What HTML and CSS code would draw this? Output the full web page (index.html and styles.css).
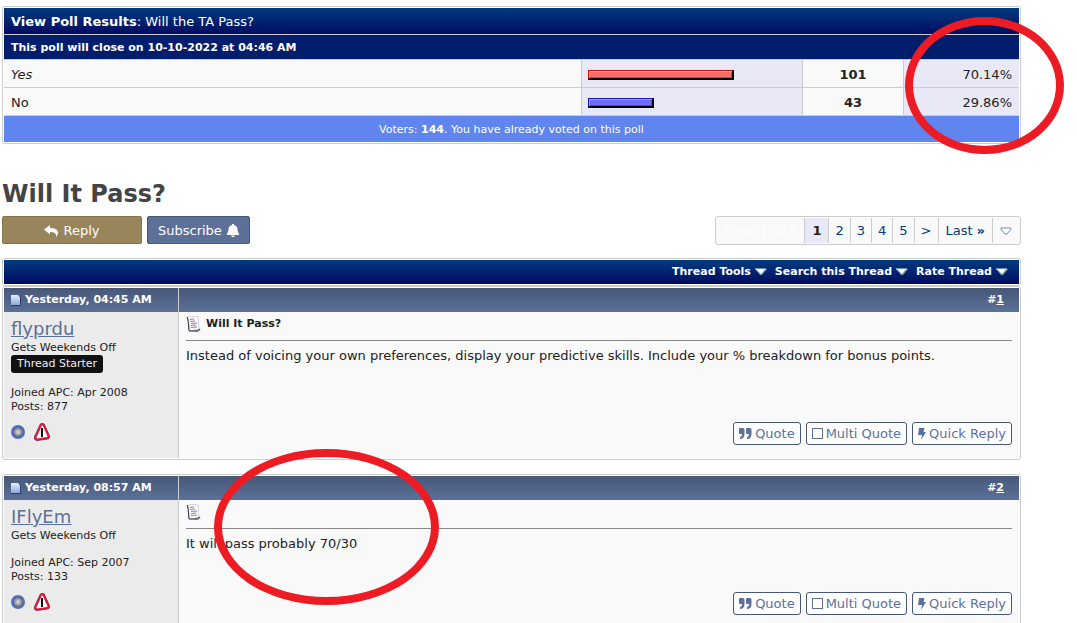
FILE: index.html
```html
<!DOCTYPE html>
<html lang="en">

<head>
    <meta charset="UTF-8">
    <meta name="viewport" content="width=device-width, initial-scale=1.0">
    <title>Will It Pass?</title>
    <link rel="stylesheet" href="styles.css">
</head>

<body>
    <!-- Shared icons -->
    <svg class="sprite" aria-hidden="true">
        <defs>
            <linearGradient id="page-fill" x1="0" y1="0" x2="0" y2="1">
                <stop offset="0" stop-color="#e4effb" />
                <stop offset="1" stop-color="#8ea9de" />
            </linearGradient>
            <radialGradient id="orb-fill">
                <stop offset="0" stop-color="#e4e4e4" />
                <stop offset="1" stop-color="#666a74" />
            </radialGradient>
        </defs>
        <symbol id="icon-page" viewBox="0 0 10 11">
            <path d="M0 0h7l3 3v8H0z" fill="#2c3c6a" />
            <path d="M0 0h7l2 3v7H0z" fill="url(#page-fill)" />
            <path d="M7 0v3h2" fill="#cfdcf3" />
        </symbol>
        <symbol id="icon-down" viewBox="0 0 12 8">
            <path d="M0 1h12L7 7H5z" fill="#7f9fa9" />
            <path d="M1 1h9L6 6z" fill="#fff" />
            <path d="M0 1h11" stroke="#dfe8ea" />
        </symbol>
        <symbol id="icon-down-outline" viewBox="0 0 12 8">
            <path d="M1 1h10v1L7 7H5L1 2z" fill="#fff" stroke="#6f92a8" />
        </symbol>
        <symbol id="icon-note" viewBox="0 0 15 16">
            <path d="M1 1l11-1 1 13 2 1-3 2-8-1z" fill="#a8aab6" />
            <path d="M2 1l10-1 1 13-9 2z" fill="#f8f8fc" stroke="#d4d5de" />
            <path d="M1 1l1 3 1 11 8 0 3-2" fill="none" stroke="#33353c" />
            <path d="M4 3.500l4-.5M4 5.500l5-.5M5 7.500l6-.5M5 9.500l5-.5M5 11.500l6-.5" stroke="#8b8d96" />
        </symbol>
        <symbol id="icon-orb" viewBox="0 0 14 14">
            <circle cx="7" cy="7" r="6" fill="#23346f" stroke="#4a6fd0" stroke-width="2" />
            <circle cx="7" cy="7" r="5" fill="url(#orb-fill)" />
        </symbol>
        <symbol id="icon-warn" viewBox="0 0 16 18">
            <path d="M7 2q1.500-1 2.500 0l5 11q0 2-1.500 2L3 16.500Q1 16 1.500 14z" fill="#fff" stroke="#434a72" stroke-width="3" stroke-linejoin="round" />
            <path d="M7 2q1.500-1 2.500 0l5 11q0 2-1.500 2L3 16.500Q1 16 1.500 14z" fill="#fff" stroke="#ee1438" stroke-width="2" stroke-linejoin="round" />
            <path d="M8 5v9" stroke="#111" stroke-width="2" />
        </symbol>
        <symbol id="icon-quote" viewBox="0 0 13 11">
            <path d="M1 0h3q1.500 0 1.500 1.500V6q0 5-4.500 5V9q2 0 2-3H1Q0 6 0 5V1q0-1 1-1z" fill="currentColor" />
            <path d="M8 0h3q1.500 0 1.500 1.500V6q0 5-4.500 5V9q2 0 2-3H8Q7 6 7 5V1q0-1 1-1z" fill="currentColor" />
        </symbol>
        <symbol id="icon-bolt" viewBox="0 0 8 12">
            <path d="M1 0h5.500L5.500 4H8L3 12 4 7H0z" fill="currentColor" />
        </symbol>
    </svg>

    <main class="page">
        <!-- Poll -->
        <table class="poll">
            <colgroup>
                <col>
                <col class="col-bar">
                <col class="col-count">
                <col class="col-percent">
            </colgroup>
            <thead>
                <tr>
                    <th class="poll-title" colspan="4">View Poll Results<span>: Will the TA Pass?</span></th>
                </tr>
                <tr>
                    <th class="poll-close" colspan="4">This poll will close on 10-10-2022 at 04:46 AM</th>
                </tr>
            </thead>
            <tbody>
                <tr>
                    <td><em>Yes</em></td>
                    <td class="bar-cell"><div class="bar red" style="width: 146px"></div></td>
                    <td class="count">101</td>
                    <td class="percent">70.14%</td>
                </tr>
                <tr>
                    <td>No</td>
                    <td class="bar-cell"><div class="bar blue" style="width: 66px"></div></td>
                    <td class="count">43</td>
                    <td class="percent">29.86%</td>
                </tr>
            </tbody>
            <tfoot>
                <tr>
                    <td class="voters" colspan="4">Voters: <b>144</b>. You have already voted on this poll</td>
                </tr>
            </tfoot>
        </table>

        <h1>Will It Pass?</h1>

        <div class="thread-actions">
            <a class="button reply" href="#">
                <svg width="14" height="12" viewBox="0 0 14 12"><path d="M0 4.500L6 0v3q8 0 8 5 0 2-2 4 1-5-6-5v2.500z" fill="currentColor" /></svg>
                Reply
            </a>
            <a class="button subscribe" href="#">
                Subscribe
                <svg width="12" height="13" viewBox="0 0 12 13"><path d="M5 1V0h2v1q3.500 1 3.500 4 0 3 1.500 4.500V11H0V9.500Q1.500 8 1.500 5 1.500 2 5 1zM4 11.500h4q-.5 1.500-2 1.500t-2-1.500z" fill="currentColor" /></svg>
            </a>
            <nav class="pagination" aria-label="Pages">
                <span class="page-info">Page 1 of 8</span>
                <span class="current">1</span>
                <a class="number" href="#">2</a>
                <a class="number" href="#">3</a>
                <a class="number" href="#">4</a>
                <a class="number" href="#">5</a>
                <a class="number" href="#">&gt;</a>
                <a href="#">Last <b>»</b></a>
                <a href="#" aria-label="Go to page"><svg width="12" height="8"><use href="#icon-down-outline" /></svg></a>
            </nav>
        </div>

        <!-- Thread toolbar -->
        <div class="frame">
            <div class="toolbar">
                <a href="#">Thread Tools <svg width="12" height="8"><use href="#icon-down" /></svg></a>
                <a href="#">Search this Thread <svg width="12" height="8"><use href="#icon-down" /></svg></a>
                <a href="#">Rate Thread <svg width="12" height="8"><use href="#icon-down" /></svg></a>
            </div>
        </div>

        <!-- Posts -->
        <article class="frame post">
            <header class="post-date"><svg width="10" height="11"><use href="#icon-page" /></svg> Yesterday, 04:45 AM</header>
            <div class="post-number">#<a href="#">1</a></div>
            <aside class="author">
                <a class="username" href="#">flyprdu</a>
                <div>Gets Weekends Off</div>
                <div class="badge">Thread Starter</div>
                <div class="stats">Joined APC: Apr 2008<br>Posts: 877</div>
                <div class="author-icons">
                    <svg width="14" height="14"><use href="#icon-orb" /></svg>
                    <svg width="16" height="18"><use href="#icon-warn" /></svg>
                </div>
            </aside>
            <div class="message">
                <h2><svg width="15" height="16"><use href="#icon-note" /></svg> Will It Pass?</h2>
                <p>Instead of voicing your own preferences, display your predictive skills. Include your % breakdown for bonus points.</p>
                <div class="post-buttons">
                    <a href="#"><svg width="13" height="11"><use href="#icon-quote" /></svg>Quote</a>
                    <button type="button"><span class="box"></span>Multi Quote</button>
                    <button type="button"><svg width="8" height="12"><use href="#icon-bolt" /></svg>Quick Reply</button>
                </div>
            </div>
        </article>

        <article class="frame post">
            <header class="post-date"><svg width="10" height="11"><use href="#icon-page" /></svg> Yesterday, 08:57 AM</header>
            <div class="post-number">#<a href="#">2</a></div>
            <aside class="author">
                <a class="username" href="#">IFlyEm</a>
                <div>Gets Weekends Off</div>
                <div class="stats">Joined APC: Sep 2007<br>Posts: 133</div>
                <div class="author-icons">
                    <svg width="14" height="14"><use href="#icon-orb" /></svg>
                    <svg width="16" height="18"><use href="#icon-warn" /></svg>
                </div>
            </aside>
            <div class="message">
                <h2><svg width="15" height="16"><use href="#icon-note" /></svg></h2>
                <p>It will pass probably 70/30</p>
                <div class="post-buttons">
                    <a href="#"><svg width="13" height="11"><use href="#icon-quote" /></svg>Quote</a>
                    <button type="button"><span class="box"></span>Multi Quote</button>
                    <button type="button"><svg width="8" height="12"><use href="#icon-bolt" /></svg>Quick Reply</button>
                </div>
            </div>
        </article>
    </main>

    <!-- Highlight circles -->
    <div class="circle circle-result"></div>
    <div class="circle circle-guess"></div>
</body>

</html>
```

FILE: styles.css
```css
* {
    box-sizing: border-box;
}

body {
    font-family: Verdana, "DejaVu Sans", sans-serif;
    font-size: 13px;
    line-height: 16px;
    margin: 0;
    background-color: #fff;
    color: #222;
    position: relative;
}

svg {
    flex: none;
}

.sprite {
    position: absolute;
    width: 0;
    height: 0;
}

.page {
    padding: 6px 56px 0 2px;
}

/* Poll */
.poll {
    width: 100%;
    table-layout: fixed;
    border-spacing: 0;
    border: 1px solid #ccc;
    border-radius: 3px;
    padding: 1px;
}

.col-bar {
    width: 221px;
}

.col-count {
    width: 101px;
}

.col-percent {
    width: 116px;
}

.poll th,
.poll td {
    padding: 2px 7px 0;
    text-align: left;
    border-top: 1px solid #ccc;
}

.poll .poll-title {
    height: 26px;
    border-top: none;
    background: linear-gradient(#003b80, #000c60);
    color: #fff;
}

.poll-title span {
    font-weight: normal;
}

.poll .poll-close {
    height: 25px;
    background-color: #021d6b;
    color: #fff;
    font-size: 11px;
}

.poll tbody td {
    height: 28px;
    background-color: #f9f9f9;
}

.poll td + td {
    border-left: 1px solid #ccc;
}

.poll tbody .bar-cell {
    padding: 2px 6px 0;
    background-color: #e8e8f6;
}

.poll tbody .count {
    text-align: center;
    font-weight: bold;
}

.poll tbody .percent {
    text-align: right;
    background-color: #e8e8f6;
}

.poll .voters {
    height: 27px;
    background-color: #6085ee;
    color: #fff;
    font-size: 11px;
    text-align: center;
}

.bar {
    height: 10px;
    border: 1px solid #000;
    border-width: 1px 2px 2px 1px;
}

.red {
    background-color: #f96c6c;
    border-top-color: #d20e0e;
    border-left-color: #d20e0e;
    box-shadow: inset 1px 1px #ff9c9c, inset -1px -1px #c94848;
}

.blue {
    background-color: #6c6cf9;
    border-top-color: #1616c8;
    border-left-color: #1616c8;
    box-shadow: inset 1px 1px #9c9cff, inset -1px -1px #4848c9;
}

h1 {
    margin: 34px 0 6px;
    font-size: 24px;
    line-height: 32px;
    color: #444;
}

/* Actions and pagination */
.thread-actions {
    display: flex;
    gap: 5px;
    margin-bottom: 13px;
}

.button {
    display: flex;
    align-items: center;
    justify-content: center;
    gap: 5px;
    height: 28px;
    padding: 1px 10px 0;
    border: 1px solid #46587a;
    border-radius: 2px;
    background-color: #5c7099;
    color: #fff;
    text-decoration: none;
}

.reply {
    width: 140px;
    background-color: #98855b;
    border-color: #857348;
}

.pagination {
    display: flex;
    height: 29px;
    margin-left: auto;
    padding: 1px;
    border: 1px solid #ccc;
    border-radius: 3px;
    background-color: #f9f9f9;
}

.pagination > * {
    display: flex;
    align-items: center;
    gap: 4px;
    padding: 0 7px;
    border-left: 1px solid #ccc;
    color: #003b80;
    text-decoration: none;
}

.pagination .number {
    padding: 0 6px;
}

.pagination .page-info {
    border-left: none;
    color: #fff;
}

.pagination .current {
    background-color: #e8e8f6;
    color: #222;
    font-weight: bold;
}

/* Thread */
.frame {
    border: 1px solid #ccc;
    border-radius: 3px;
    padding: 1px;
}

.toolbar {
    display: flex;
    justify-content: flex-end;
    gap: 8px;
    height: 24px;
    padding: 0 11px;
    background: linear-gradient(#003b80, #000c60);
}

.toolbar a {
    display: flex;
    align-items: center;
    gap: 4px;
    color: #fff;
    font-size: 11px;
    font-weight: bold;
    text-decoration: none;
}

.post {
    display: grid;
    grid-template-columns: 174px 1fr;
    margin-bottom: 14px;
}

.post-date,
.post-number {
    display: flex;
    align-items: center;
    height: 24px;
    padding: 0 7px;
    background: linear-gradient(#475877, #5c7099);
    color: #fff;
    font-size: 11px;
    font-weight: bold;
}

.post-date {
    gap: 4px;
}

.post-number {
    justify-content: flex-end;
    padding-right: 15px;
    border-left: 1px solid #ccc;
}

.post-number a {
    color: #fff;
}

.author {
    padding: 5px 7px 17px;
    background-color: #ebebeb;
    font-size: 11px;
    line-height: 14px;
}

.username {
    display: block;
    font-size: 18px;
    line-height: 24px;
    color: #5c7099;
}

.badge {
    width: max-content;
    height: 18px;
    padding: 2px 6px;
    border-radius: 3px;
    background-color: #111;
    color: #eee;
}

.stats {
    margin-top: 13px;
}

.author-icons {
    display: flex;
    align-items: center;
    gap: 9px;
    margin-top: 9px;
}

.message {
    display: flex;
    flex-direction: column;
    padding: 0 7px 13px;
    border-left: 1px solid #ccc;
    background-color: #f9f9f9;
}

.message h2 {
    display: flex;
    align-items: center;
    gap: 5px;
    height: 29px;
    margin: 0 0 7px;
    padding-bottom: 4px;
    border-bottom: 1px solid #888;
    font-size: 11px;
}

.message p {
    margin: 0;
}

.post-buttons {
    display: flex;
    justify-content: flex-end;
    gap: 5px;
    margin-top: auto;
}

.post-buttons a,
.post-buttons button {
    display: flex;
    align-items: center;
    gap: 3px;
    height: 23px;
    padding: 0 5px;
    border: 1px solid #475877;
    border-radius: 3px;
    background-color: #fff;
    color: #5c7099;
    font: inherit;
    text-decoration: none;
    cursor: pointer;
}

.box {
    width: 11px;
    height: 11px;
    border: 1px solid #5c7099;
}

/* Highlight circles lie over the page */
.circle {
    position: absolute;
    border: 8px solid #ed1c24;
    border-radius: 50%;
    pointer-events: none;
}

.circle-result {
    top: 17px;
    left: 905px;
    width: 159px;
    height: 137px;
}

.circle-guess {
    top: 449px;
    left: 214px;
    width: 225px;
    height: 156px;
}
```
